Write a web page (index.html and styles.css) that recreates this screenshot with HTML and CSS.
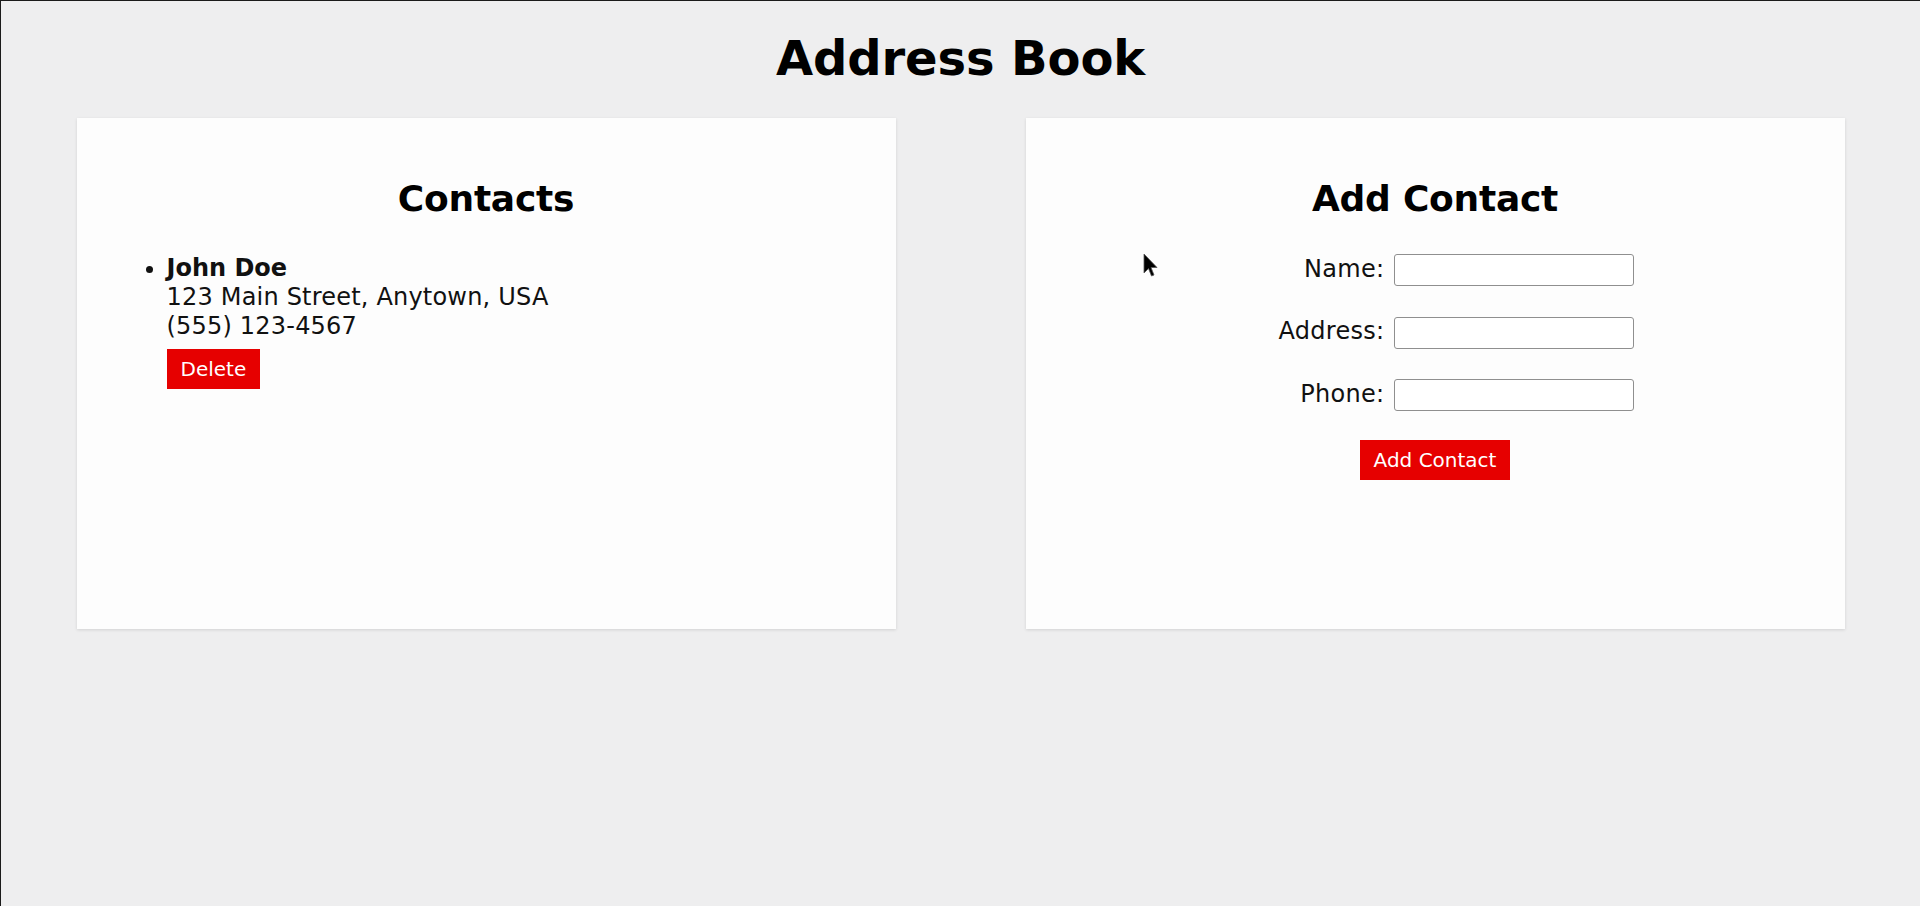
FILE: index.html
```html
<!DOCTYPE html>
<html lang="en">
<head>
<meta charset="utf-8">
<title>Address Book</title>
<link rel="stylesheet" href="styles.css">
</head>
<body>
  <h1 class="title">Address Book</h1>
  <main class="columns">
    <section class="card">
      <h2 class="card-title">Contacts</h2>
      <ul class="contact-list">
        <li class="contact">
          <strong class="contact-name">John Doe</strong><br>
          123 Main Street, Anytown, USA<br>
          (555) 123-4567
          <button class="btn btn-delete" type="button">Delete</button>
        </li>
      </ul>
    </section>
    <section class="card">
      <h2 class="card-title">Add Contact</h2>
      <form class="contact-form">
        <div class="form-row">
          <label class="form-label" for="name">Name:</label>
          <input class="form-input" id="name" type="text">
        </div>
        <div class="form-row">
          <label class="form-label" for="address">Address:</label>
          <input class="form-input" id="address" type="text">
        </div>
        <div class="form-row">
          <label class="form-label" for="phone">Phone:</label>
          <input class="form-input" id="phone" type="text">
        </div>
        <div class="form-actions">
          <button class="btn" type="button">Add Contact</button>
        </div>
      </form>
    </section>
  </main>
  <svg class="cursor" width="18" height="26" viewBox="0 0 18 26" aria-hidden="true">
    <path d="M1 1 L1 20 L5.5 15.5 L8.5 23 L11 22 L8 14.5 L14 14.5 Z" fill="#000" stroke="#555" stroke-width="0.8" stroke-linejoin="round"/>
  </svg>
</body>
</html>
```

FILE: styles.css
```css
html {
  background: #eeeeef;
}

body {
  margin: 0;
  min-height: 905px;
  border-top: 1px solid #1a1a1a;
  border-left: 1px solid #1a1a1a;
  font-family: "DejaVu Sans", Verdana, sans-serif;
  font-size: 24px;
  color: #111;
  position: relative;
}

.title {
  margin: 29px 0 32px;
  font-size: 48px;
  font-weight: bold;
  line-height: normal;
  letter-spacing: -0.1px;
  text-align: center;
  color: #000;
}

.columns {
  display: flex;
  justify-content: center;
  gap: 130px;
}

.card {
  box-sizing: border-box;
  width: 819px;
  height: 511px;
  padding: 30px;
  background: #fdfdfd;
  box-shadow: 0 1px 3px rgba(0, 0, 0, 0.12);
}

.card-title {
  margin: 30px 0 35px;
  font-size: 36px;
  font-weight: bold;
  line-height: normal;
  letter-spacing: -0.25px;
  text-align: center;
  color: #000;
}

.contact-list {
  margin: 0;
  padding-left: 60px;
  line-height: 1.215;
  letter-spacing: 0.2px;
}

.contact-name {
  font-weight: bold;
  letter-spacing: 0;
}

.btn {
  font-family: "DejaVu Sans", Verdana, sans-serif;
  font-size: 20px;
  line-height: normal;
  letter-spacing: 0;
  padding: 8px 14px;
  border: none;
  border-radius: 0;
  background: #e60000;
  color: #fff;
}

.btn-delete {
  display: block;
  margin-top: 8px;
}

.contact-form {
  display: flex;
  flex-direction: column;
  align-items: center;
}

.form-row {
  display: flex;
  align-items: center;
  gap: 9px;
  height: 32px;
  margin-bottom: 30.5px;
  margin-left: -2px;
}

.form-label {
  width: 150px;
  text-align: right;
  line-height: normal;
  letter-spacing: 0.3px;
  margin-top: -3px;
}

.form-input {
  box-sizing: border-box;
  width: 240px;
  height: 32px;
  padding: 2px 4px;
  border: 1.5px solid #8f8f8f;
  border-radius: 3px;
  background: #fff;
  font-family: "DejaVu Sans", Verdana, sans-serif;
  font-size: 20px;
}

.form-actions {
  margin-top: -2px;
}

.cursor {
  position: absolute;
  left: 1142px;
  top: 252px;
}
```
